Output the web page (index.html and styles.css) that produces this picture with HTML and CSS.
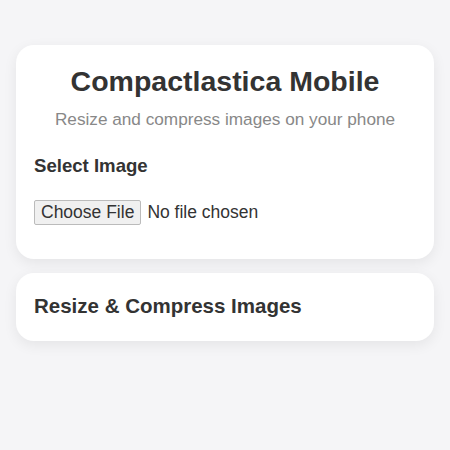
FILE: index.html
```html
<!DOCTYPE html>
<html lang="en">
<head>
  <meta charset="UTF-8" />
  <title>Compactlastica Mobile</title>
  <meta name="viewport" content="width=device-width, initial-scale=1" />
  <link rel="stylesheet" href="styles.css">
</head>
<body>

  <main class="container">
    <section class="card">
      <h1>Compactlastica Mobile</h1>
      <p class="subtitle">Resize and compress images on your phone</p>

      <label for="file-input" class="label">Select Image</label>
      <input type="file" id="file-input" accept="image/*" />
    </section>

    <section class="card card-compact">
      <h2>Resize &amp; Compress Images</h2>
    </section>
  </main>

</body>
</html>
```

FILE: styles.css
```css
:root {
  --color-bg: #f5f5f7;
  --color-card: #ffffff;
  --color-text: #333333;
  --color-muted: #888888;
  --radius: 18px;
  --shadow: 0 4px 14px rgba(0, 0, 0, 0.07);
}

body {
  background-color: var(--color-bg);
  font-family: "Liberation Sans", Arial, sans-serif;
  color: var(--color-text);
  margin: 0;
}

.container {
  padding: 45px 16px 16px;
  display: flex;
  flex-direction: column;
  gap: 14px;
}

.card {
  background-color: var(--color-card);
  border-radius: var(--radius);
  box-shadow: var(--shadow);
  padding: 20px 18px;
}

.card-compact {
  padding: 19px 18px 21px;
}

h1 {
  margin: 0;
  font-size: 28.5px;
  text-align: center;
  line-height: 32px;
}

.subtitle {
  margin: 12px 0 25px;
  font-size: 17.2px;
  color: var(--color-muted);
  text-align: center;
}

.label {
  display: block;
  font-size: 18.6px;
  font-weight: 700;
  margin-bottom: 23px;
}

input[type="file"] {
  font-family: "Liberation Sans", Arial, sans-serif;
  font-size: 17.5px;
  color: var(--color-text);
  margin-bottom: 14px;
}

input[type="file"]::file-selector-button {
  font: inherit;
  color: var(--color-text);
  background-color: #f0f0f0;
  border: 1px solid #bbbbbb;
  border-radius: 2px;
  padding: 1px 6px;
  margin-right: 6px;
}

h2 {
  margin: 0;
  font-size: 20.5px;
  line-height: 28px;
}
```
